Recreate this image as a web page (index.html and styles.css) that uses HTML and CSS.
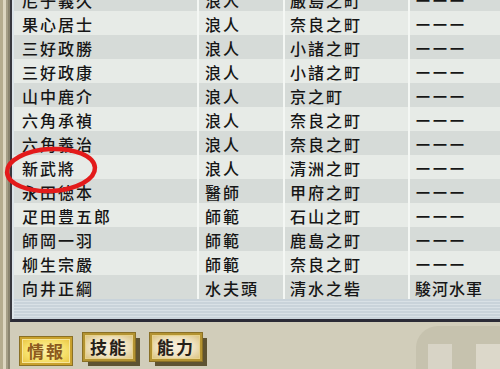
FILE: index.html
```html
<!DOCTYPE html>
<html lang="zh-Hant">
<head>
<meta charset="utf-8">
<title>武將一覧</title>
<link rel="stylesheet" href="styles.css">
</head>
<body>
<div class="screen">
  <div class="frame-left"></div>
  <div class="main">
    <div class="panel">
      <div class="table">
        <div class="row dark"><span class="c1">尼子義久</span><span class="c2">浪人</span><span class="c3">厳島之町</span><span class="c4">ーーー</span></div>
        <div class="row"><span class="c1">果心居士</span><span class="c2">浪人</span><span class="c3">奈良之町</span><span class="c4">ーーー</span></div>
        <div class="row dark"><span class="c1">三好政勝</span><span class="c2">浪人</span><span class="c3">小諸之町</span><span class="c4">ーーー</span></div>
        <div class="row"><span class="c1">三好政康</span><span class="c2">浪人</span><span class="c3">小諸之町</span><span class="c4">ーーー</span></div>
        <div class="row dark"><span class="c1">山中鹿介</span><span class="c2">浪人</span><span class="c3">京之町</span><span class="c4">ーーー</span></div>
        <div class="row"><span class="c1">六角承禎</span><span class="c2">浪人</span><span class="c3">奈良之町</span><span class="c4">ーーー</span></div>
        <div class="row dark"><span class="c1">六角義治</span><span class="c2">浪人</span><span class="c3">奈良之町</span><span class="c4">ーーー</span></div>
        <div class="row"><span class="c1">新武將</span><span class="c2">浪人</span><span class="c3">清洲之町</span><span class="c4">ーーー</span></div>
        <div class="row dark"><span class="c1">永田徳本</span><span class="c2">醫師</span><span class="c3">甲府之町</span><span class="c4">ーーー</span></div>
        <div class="row"><span class="c1">疋田豊五郎</span><span class="c2">師範</span><span class="c3">石山之町</span><span class="c4">ーーー</span></div>
        <div class="row dark"><span class="c1">師岡一羽</span><span class="c2">師範</span><span class="c3">鹿島之町</span><span class="c4">ーーー</span></div>
        <div class="row"><span class="c1">柳生宗嚴</span><span class="c2">師範</span><span class="c3">奈良之町</span><span class="c4">ーーー</span></div>
        <div class="row dark"><span class="c1">向井正綱</span><span class="c2">水夫頭</span><span class="c3">清水之砦</span><span class="c4">駿河水軍</span></div>
      </div>
      <div class="panel-foot"></div>
    </div>
    <div class="tabs">
      <div class="tab active">情報</div>
      <div class="tab">技能</div>
      <div class="tab">能力</div>
    </div>
  </div>
  <svg class="circle" width="100" height="52" viewBox="0 0 100 52">
    <ellipse cx="50" cy="26" rx="44" ry="21" fill="none" stroke="#e31b1b" stroke-width="4.5" transform="rotate(-3 50 26)"/>
  </svg>
  <div class="blob"></div>
</div>
</body>
</html>
```

FILE: styles.css
```css
html, body {
  margin: 0;
  padding: 0;
  width: 500px;
  height: 369px;
  overflow: hidden;
  background: #d1cdba;
  font-family: "Noto Sans CJK TC", "Noto Sans CJK JP", sans-serif;
}

.screen {
  position: relative;
  display: flex;
  width: 500px;
  height: 369px;
  overflow: hidden;
}

.frame-left {
  flex: 0 0 10px;
  background: linear-gradient(to right,
    #b5ac8e 0, #b5ac8e 3px,
    #ddd6c0 3px, #ddd6c0 6px,
    #a59e86 6px, #a59e86 8px,
    #8a846e 8px, #8a846e 10px);
}

.main {
  flex: 1;
  display: flex;
  flex-direction: column;
  min-width: 0;
}

.panel {
  height: 322px;
  display: flex;
  flex-direction: column;
  border-left: 2px solid #38383e;
  border-bottom: 3px solid #2b2b36;
  box-sizing: border-box;
  background: #dde5ea;
  padding-left: 2px;
  overflow: hidden;
}

.table {
  margin-top: -13px;
  display: flex;
  flex-direction: column;
}

.row {
  height: 24px;
  display: grid;
  grid-template-columns: 183px 86px 125px 1fr;
  align-items: center;
  background: #e7ebe7;
  color: #161616;
  font-size: 16px;
  font-weight: 500;
  letter-spacing: 2px;
  white-space: nowrap;
}

.row.dark {
  background: #d6dbd8;
}

.row span {
  height: 24px;
  line-height: 27px;
  box-sizing: border-box;
}

.c1 {
  padding-left: 8px;
}

.c2, .c3, .c4 {
  border-left: 2px solid #f4f7f4;
}

.c2 {
  padding-left: 6px;
}

.c3 {
  padding-left: 5px;
}

.c4 {
  padding-left: 5px;
  letter-spacing: 1px;
}

.panel-foot {
  flex: 1;
  background: repeating-linear-gradient(to bottom,
    #c9d3da 0, #c9d3da 2px,
    #d9e1e6 2px, #d9e1e6 3px);
}

.tabs {
  display: flex;
  gap: 15px;
  padding: 11px 0 0 6px;
}

.tab {
  width: 52px;
  height: 28px;
  box-sizing: border-box;
  border: 2px solid #b39332;
  outline: 1px solid #8a7025;
  background: radial-gradient(ellipse at center, #f6eedb 0, #efe2bf 55%, #d8c07c 100%);
  box-shadow: inset 0 0 0 1px #e8d28a, 5px 5px 0 #5e5332;
  color: #262018;
  font-size: 17px;
  font-weight: 700;
  letter-spacing: 2px;
  text-align: center;
  line-height: 24px;
}

.tab.active {
  transform: translate(4px, 4px);
  background: radial-gradient(ellipse at center, #fbf1a8 0, #f6e06a 60%, #e9c440 100%);
  border-color: #c9a12c;
  box-shadow: inset 0 0 0 1px #f7e69a;
  color: #8c5a1e;
}

.circle {
  position: absolute;
  left: 1px;
  top: 144px;
}

.blob {
  position: absolute;
  left: 416px;
  top: 326px;
  width: 110px;
  height: 60px;
  border-radius: 22px 30px 0 0;
  background:
    linear-gradient(to right, transparent 0, transparent 12px, #d8d4c6 12px, #d8d4c6 36px, transparent 36px, transparent 60px, #dcd8ca 60px),
    #c6c2ae;
  background-size: 100% 100%;
  background-position: 0 18px;
  background-repeat: no-repeat;
}
```
